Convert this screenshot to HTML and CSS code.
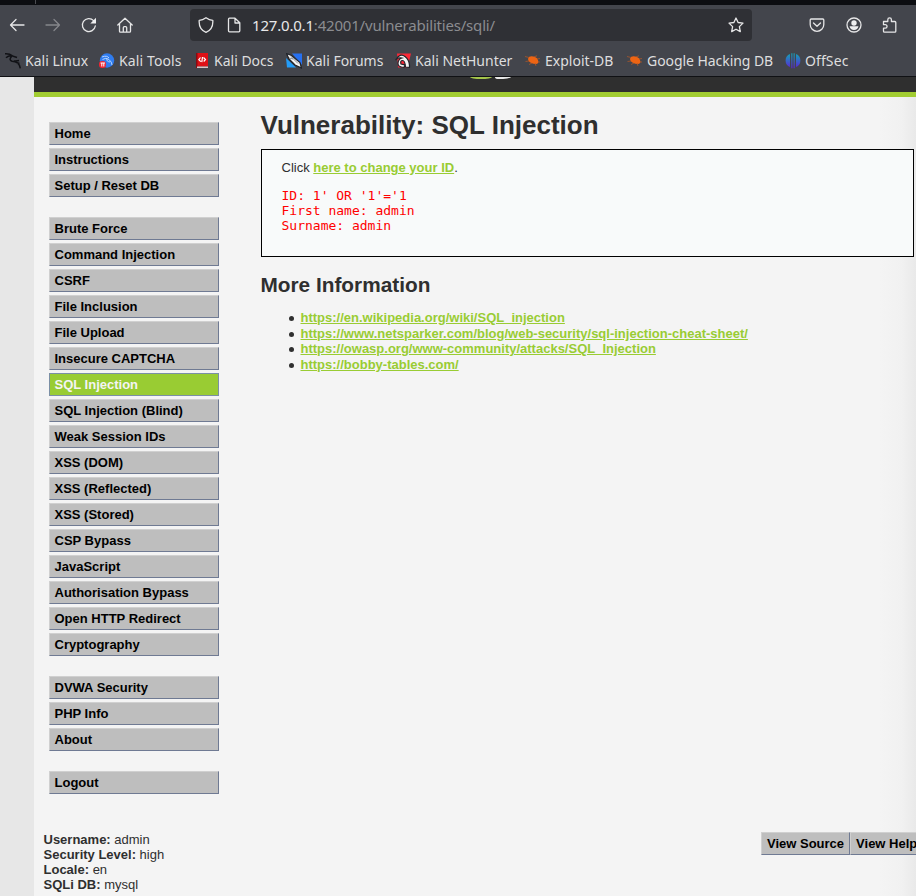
FILE: index.html
```html
<!DOCTYPE html>
<html lang="en">
<head>
<meta charset="utf-8">
<title>Vulnerability: SQL Injection</title>
<link rel="stylesheet" href="styles.css">
</head>
<body>
<header class="browser">
  <div class="tabstrip"></div>
  <div class="toolbar">
    <nav class="nav-buttons">
      <svg class="icon" viewBox="0 0 16 16"><path d="M15 8H1.500M7 2.500 1.500 8 7 13.500"/></svg>
      <svg class="icon dim" viewBox="0 0 16 16"><path d="M1 8h13.500M9 2.500 14.500 8 9 13.500"/></svg>
      <svg class="icon" viewBox="0 0 16 16"><path d="M14.300 9A6.500 6.500 0 1 1 12.600 3.600"/><path class="fill" d="M15 .8v5.700H9.300z"/></svg>
      <svg class="icon" viewBox="0 0 16 16"><path d="M.8 8 8 1.200 15.200 8M2.500 7v7.200q0 1 1 1h9q1 0 1-1V7M6.300 15v-4.300q0-1 1-1h1.400q1 0 1 1V15"/></svg>
    </nav>
    <div class="urlbar">
      <svg class="icon" viewBox="0 0 16 16"><path d="M8 .7q3.300 2.400 6.800 2.600C15.200 9 12.300 13.500 8 15.300 3.700 13.500.8 9 1.200 3.300 4.700 3.100 8 .7 8 .7z"/></svg>
      <svg class="icon" viewBox="0 0 16 16"><path d="M3.500 1.200H9l4.800 4.600v8q0 1-1 1H3.500q-1 0-1-1V2.200q0-1 1-1zM9 1.200V6h4.800"/></svg>
      <span class="url"><b>127.0.0.1</b>:42001/vulnerabilities/sqli/</span>
      <svg class="icon star" viewBox="0 0 16 16"><path d="m8 1 2.100 4.500 4.900.6-3.600 3.500.9 5L8 12.200l-4.300 2.400.9-5L1 6.100l4.900-.6z"/></svg>
    </div>
    <div class="actions">
      <svg class="icon" viewBox="0 0 16 16"><path d="M2.200 2h11.600q1 0 1 1v4.500a6.800 6.800 0 0 1-13.600 0V3q0-1 1-1zM4.500 6 8 9.300 11.500 6"/></svg>
      <svg class="icon" viewBox="0 0 16 16"><circle cx="8" cy="8" r="7"/><circle class="fill" cx="8" cy="6" r="2.700"/><path class="fill" d="M3.500 9.300h9q-.8 3.700-4.500 3.700T3.500 9.300z"/></svg>
      <svg class="icon" viewBox="0 0 16 16"><path d="M5.800 4.500V2.700a1.800 1.800 0 0 1 3.600 0v1.800h3.400q1 0 1 1v8.700q0 1-1 1H2.500q-1 0-1-1v-3h1.800a1.700 1.700 0 0 0 0-3.500H1.500V4.500z"/></svg>
    </div>
  </div>
  <div class="bookmarks">
    <a class="bm"><svg viewBox="0 0 16 16"><path class="dragon" d="M0 .8q4.500-.3 7.500 2M1 4.800Q4 2 7.500 3L12 4.500M6.500 3.500Q3.500 7 7 8.300q7 0 8.300 7M9 8.300l5-.8M11.500 9.500l3 1"/></svg><span>Kali Linux</span></a>
    <a class="bm"><svg viewBox="0 0 16 16"><circle cx="8" cy="7.500" r="7.200" fill="#2f7cf0"/><path d="M3 4q5-2 7 1M3.500 6.500Q7 4 10 6.500t3 5.500M8 5.500q-1 3 3 3.500" fill="none" stroke="#b5d4ff"/><rect y="8" width="7" height="7" rx="3" fill="#ec2634"/><path d="M1.500 10h4.500M2.800 10v3.500M4.800 10v3.500" stroke="#fff"/></svg><span class="t2">Kali Tools</span></a>
    <a class="bm"><svg viewBox="0 0 16 16"><path fill="#df1016" d="M2.500 0H14v13.500H2.500z"/><path fill="#870c12" d="M2 0h1.500v15H2z"/><path fill="#d8c5c6" d="M3 13.500h11V15H3z"/><path d="M6.500 4.500 4.800 6.700l2 2M9.500 4.500l2 2-1.800 2M8.500 4 7.800 9.200" fill="none" stroke="#fff" stroke-width="1.200"/></svg><span>Kali Docs</span></a>
    <a class="bm"><svg viewBox="0 0 16 16"><path fill="#239cf8" d="M0 5l10 9.500H1z"/><path fill="#2670f0" d="M6 .5h10V12z"/><path d="m.5.5 5 2 8.500 7 1.500 5.500L9 12 3 6z" fill="#f5f5f5" stroke="#20242b" stroke-width="1.300"/><path d="m5 3.500 7 7M3 5l4 1" stroke="#6b7078" fill="none" stroke-width=".8"/></svg><span>Kali Forums</span></a>
    <a class="bm"><svg viewBox="0 0 16 16"><path fill="#fb2837" d="M2 .5h14L12.500 14.500H3z"/><path d="M.5 7Q5-.5 10 3.500t4.500 10.800l-4-.3Q10 7.500 7.500 7.500T6 11l4 .8-1 2.700Q2.500 14 3 10t4-5Q3 4 .5 7z" fill="#f4f4f4" stroke="#20242b" stroke-width="1.200"/></svg><span>Kali NetHunter</span></a>
    <a class="bm"><svg viewBox="0 0 16 16"><path d="M3 5.800q1-3.300 5.500-2.200 4.500 1 5 5.400-.5 3-5 1.800Q3 9.500 3 5.800z" fill="#ed6413"/><path d="M0 3.500l4 1M.5 8.500 4 8M4 11.500l3-1.500M9 3.800l3-1M12 6l3-.5M13 9h2M10 10l1 3" stroke="#a9572a" stroke-width=".8"/></svg><span>Exploit-DB</span></a>
    <a class="bm"><svg viewBox="0 0 16 16"><path d="M3 5.800q1-3.300 5.500-2.200 4.500 1 5 5.400-.5 3-5 1.800Q3 9.500 3 5.800z" fill="#ed6413"/><path d="M0 3.500l4 1M.5 8.500 4 8M4 11.500l3-1.500M9 3.800l3-1M12 6l3-.5M13 9h2M10 10l1 3" stroke="#a9572a" stroke-width=".8"/></svg><span class="t7">Google Hacking DB</span></a>
    <a class="bm"><svg viewBox="0 0 16 16"><defs><linearGradient id="g" gradientUnits="userSpaceOnUse" x1="0" y1="0" x2="0" y2="15"><stop stop-color="#10a8b5"/><stop offset="1" stop-color="#5b25d4"/></linearGradient></defs><path fill="url(#g)" d="M5 1v13a7 7 0 0 1 0-13zM6.300.2h1.100v15H6.300zM8.600.2h1.100v15H8.600zM11 1a7 7 0 0 1 0 13z"/></svg><span class="t8">OffSec</span></a>
  </div>
</header>
<div class="page">
  <div class="site">
    <div class="banner"><span class="logo-green"></span><span class="logo-white"></span></div>
    <div class="columns">
      <aside class="menu">
        <ul><li>Home</li><li>Instructions</li><li>Setup / Reset DB</li></ul>
        <ul><li>Brute Force</li><li>Command Injection</li><li>CSRF</li><li>File Inclusion</li><li>File Upload</li><li>Insecure CAPTCHA</li><li class="selected">SQL Injection</li><li>SQL Injection (Blind)</li><li>Weak Session IDs</li><li>XSS (DOM)</li><li>XSS (Reflected)</li><li>XSS (Stored)</li><li>CSP Bypass</li><li>JavaScript</li><li>Authorisation Bypass</li><li>Open HTTP Redirect</li><li>Cryptography</li></ul>
        <ul><li>DVWA Security</li><li>PHP Info</li><li>About</li></ul>
        <ul><li>Logout</li></ul>
      </aside>
      <main>
        <h1>Vulnerability: SQL Injection</h1>
        <div class="vulnerable">
          <p>Click <a>here to change your ID</a>.</p>
          <pre>ID: 1' OR '1'='1
First name: admin
Surname: admin</pre>
        </div>
        <h2>More Information</h2>
        <ul class="links">
          <li><a>https://en.wikipedia.org/wiki/SQL_injection</a></li>
          <li><a>https://www.netsparker.com/blog/web-security/sql-injection-cheat-sheet/</a></li>
          <li><a>https://owasp.org/www-community/attacks/SQL_Injection</a></li>
          <li><a>https://bobby-tables.com/</a></li>
        </ul>
      </main>
    </div>
    <footer>
      <div class="status"><b>Username:</b> admin<br><b>Security Level:</b> high<br><b>Locale:</b> en<br><b>SQLi DB:</b> mysql</div>
      <div class="buttons"><span>View Source</span><span>View Help</span></div>
    </footer>
  </div>
</div>
</body>
</html>
```
FILE: styles.css
```css
* { box-sizing: border-box; }
body {
  margin: 0;
  width: 916px;
  height: 896px;
  overflow: hidden;
  background: #e7e7e7;
  color: #2f2f2f;
  font: 13px/15px "Liberation Sans", Arial, sans-serif;
}

/* Browser chrome */
.browser {
  height: 77px;
  background: #43454c;
  border-bottom: 1px solid #101114;
  color: #dededf;
  font-family: "Noto Sans", sans-serif;
}
.tabstrip { height: 5px; background: #0c0d11; }
.tabstrip::before { content: ""; display: block; width: 1px; height: 4px; margin-left: 35px; background: #4a4b50; }
.toolbar { display: flex; height: 40px; padding-top: 4px; }
.nav-buttons { display: flex; align-items: center; gap: 20px; width: 190px; height: 32px; padding-left: 9px; }
.icon { width: 16px; height: 16px; flex: none; fill: none; stroke: #e6e6e7; stroke-width: 1.3; stroke-linecap: round; stroke-linejoin: round; }
.icon .fill { fill: #efeff0; stroke: none; }
.dim { stroke: #85868b; }
.urlbar { display: flex; align-items: center; width: 562px; height: 32px; padding: 0 8px; gap: 12px; background: #2f3035; border-radius: 4px; }
.url { flex: 1; margin-left: -2px; font-size: 15px; letter-spacing: -.19px; line-height: 32px; color: #8b8c90; white-space: nowrap; }
.url b { font-weight: 400; color: #e8e8e9; }
.actions { display: flex; align-items: center; gap: 20.5px; height: 32px; margin-left: 57px; }
.bookmarks { display: grid; grid-template-columns: 94px 95px 92px 109px 130px 102px 158px 80px; height: 31px; padding-left: 5px; align-items: center; }
.bm { display: flex; align-items: center; gap: 4px; font-size: 14px; line-height: 20px; white-space: nowrap; }
.bm svg { width: 16px; height: 16px; flex: none; }
.t2 { letter-spacing: .12px; }
.t7 { letter-spacing: -.06px; }
.t8 { letter-spacing: .1px; }
.dragon { fill: none; stroke: #111216; stroke-width: 1.5; }

/* Site */
.page { height: 819px; padding-left: 34px; }
.site { width: 882px; height: 819px; background: linear-gradient(90deg, #f4f4f4 0 845px, #f1f1f1 868px, #e9e9e9 882px); }
.banner { display: flex; gap: 3px; height: 20px; padding-left: 436px; background: #2f2f2f; border-bottom: 5px solid #a2cd32; }
.logo-green { width: 22px; height: 2px; background: #a5c64b; border-radius: 0 0 50% 50% / 0 0 100% 100%; }
.logo-white { width: 16px; height: 2px; background: #e8e8e8; border-radius: 0 0 80% 20% / 0 0 100% 100%; }
.columns { display: flex; height: 735px; }
.menu { width: 227px; padding: 25px 0 0 15px; }
.menu ul { list-style: none; margin: 0 0 20px; padding: 0; }
.menu li {
  width: 170px;
  height: 23px;
  margin-bottom: 3px;
  padding: 3px 4.5px;
  background: #bebebe;
  border: 1px solid;
  border-color: #d0d0d0 #6f7a93 #6f7a93 #d0d0d0;
  color: #000;
  font-weight: bold;
}
.menu li.selected { background: #9c3; border-color: #7b8fa5; color: #f4f4f4; }
main { width: 653px; }
h1 { margin: 13px 0 9px -.5px; font-size: 26px; line-height: 30px; }
.vulnerable { height: 108px; padding: 10px 19.5px; border: 1px solid #000; background: #f8fafa; }
.vulnerable p { margin: 0 0 13px; }
a { color: inherit; }
main a { color: #9c3; font-weight: bold; text-decoration: underline; }
pre { margin: 0; color: #f00; font: 13px/15px "DejaVu Sans Mono", monospace; }
h2 { margin: 16px 0 13px -.5px; font-size: 20.8px; line-height: 24px; }
.links { list-style: none; margin: 0; padding-left: 27.5px; line-height: 15.6px; }
.links li { display: flex; align-items: center; gap: 7px; }
.links li::before { content: ""; width: 5px; height: 5px; margin-top: 2px; border-radius: 50%; background: #2f2f2f; }
footer { display: flex; justify-content: space-between; padding-left: 9.5px; }
.buttons { display: flex; width: 155px; height: 23px; overflow: hidden; }
.buttons span { flex: none; padding: 3px 5px; background: #bebebe; border: 1px solid; border-color: #d0d0d0 #6f7a93 #6f7a93 #d0d0d0; color: #000; font-weight: bold; white-space: nowrap; }
```
